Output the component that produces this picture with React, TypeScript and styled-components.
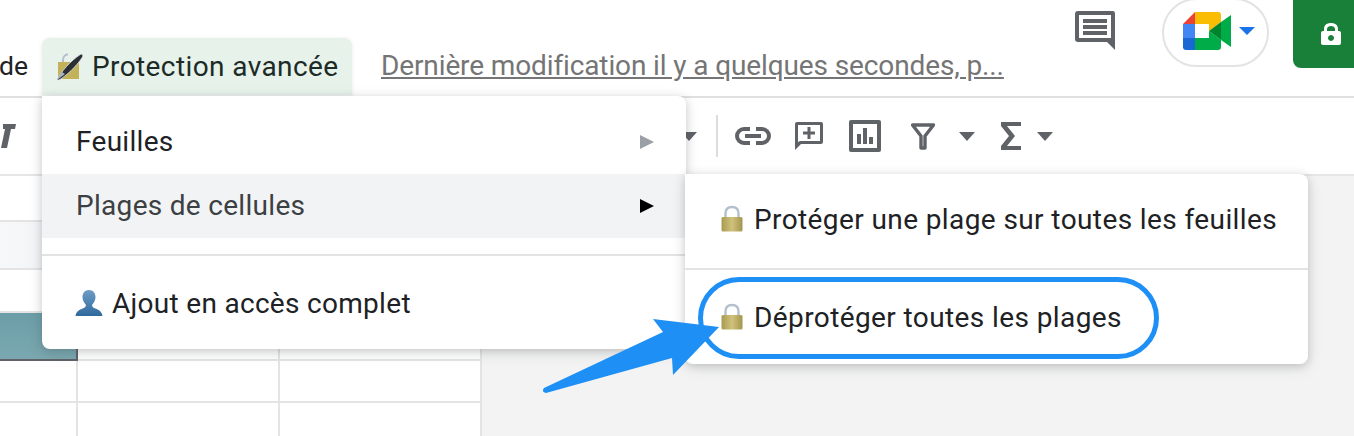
import * as React from 'react'
import styled, { createGlobalStyle } from 'styled-components'

const GlobalStyle = createGlobalStyle`
    html, body {
        margin: 0;
        padding: 0;
        background: #fff;
    }
`

const Page = styled.div`
    position: relative;
    width: 1354px;
    height: 436px;
    overflow: hidden;
    background: #f3f3f3;
    color: #202124;
    font-family: Roboto, "Liberation Sans", sans-serif;
    display: flex;
    flex-direction: column;
`

const TopBar = styled.header`
    height: 96px;
    flex: none;
    display: flex;
    align-items: flex-start;
    background: #fff;
    border-bottom: 2px solid #e0e0e0;
    box-sizing: content-box;
`

const MenuWord = styled.span`
    font-size: 26.5px;
    line-height: 32px;
    margin-top: 50px;
    margin-left: -1px;
    width: 43px;
    flex: none;
`

const ActiveTab = styled.div`
    width: 310px;
    height: 57px;
    margin-top: 38px;
    flex: none;
    box-sizing: border-box;
    padding: 0 0 0 14px;
    display: flex;
    align-items: center;
    gap: 8px;
    background: #e6f2ea;
    border-radius: 8px 8px 0 0;
    font-size: 28px;
    letter-spacing: 0.4px;
    color: #1c2b27;
    box-shadow: 0 1px 4px rgba(60, 64, 67, 0.12);
`

const LastEdit = styled.a`
    margin: 50px 0 0 29px;
    font-size: 28px;
    line-height: 32px;
    letter-spacing: -0.12px;
    color: #757575;
    text-decoration: underline;
    white-space: nowrap;
    flex: none;
`

const TopActions = styled.div`
    margin-left: auto;
    display: flex;
    align-items: flex-start;
`

const CommentButton = styled.div`
    margin-top: 11px;
    width: 41px;
    height: 40px;
`

const MeetPill = styled.div`
    margin: -2px 0 0 46px;
    width: 107px;
    height: 69px;
    box-sizing: border-box;
    border: 2px solid #e3e3e3;
    border-radius: 35px;
    display: flex;
    align-items: center;
    padding: 0 0 4px 19px;
    gap: 8px;
`

const ShareButton = styled.div`
    margin-left: 24px;
    width: 61px;
    height: 68px;
    background: #188038;
    border-radius: 0 0 0 8px;
    display: flex;
    align-items: center;
    padding: 0 0 0 28px;
    box-sizing: border-box;
`

const Toolbar = styled.div`
    height: 76px;
    flex: none;
    display: flex;
    align-items: center;
    background: #fff;
    border-bottom: 2px solid #e6e6e6;
`

const ToolIcon = styled.svg<{ $gap: number }>`
    flex: none;
    margin-left: ${(p) => p.$gap}px;
    display: block;
`

const ToolDivider = styled.div`
    flex: none;
    width: 2px;
    height: 42px;
    margin-left: 19px;
    background: #dadce0;
`

const SheetArea = styled.div`
    flex: 1;
    display: grid;
    grid-template-columns: 78px 202px 202px;
    grid-template-rows: 46px 48px 43px 48px 42px 42px;
    justify-content: start;
`

const Cell = styled.div<{ $selected?: boolean; $head?: boolean }>`
    background: ${(p) =>
        p.$selected
            ? 'linear-gradient(180deg, #6b9ea8, #7ba8b0)'
            : p.$head
                ? 'linear-gradient(90deg, #f7f8fa, #f0f1f3)'
                : '#fff'};
    border-bottom: 2px solid ${(p) => (p.$selected ? '#5f6368' : '#e4e4e4')};
    border-right: 2px solid ${(p) => (p.$selected ? '#5f6368' : '#e4e4e4')};
    box-sizing: border-box;
`

const Menu = styled.div`
    position: absolute;
    left: 42px;
    top: 96px;
    width: 644px;
    height: 253px;
    box-sizing: border-box;
    padding-top: 14px;
    background: #fff;
    border-radius: 0 8px 8px 8px;
    box-shadow: 0 2px 8px rgba(60, 64, 67, 0.22), 0 4px 16px rgba(60, 64, 67, 0.1);
`

const MenuRow = styled.div<{ $active?: boolean }>`
    height: 64px;
    display: flex;
    align-items: center;
    justify-content: space-between;
    padding: 0 32px 0 34px;
    font-size: 28px;
    letter-spacing: 0.3px;
    background: ${(p) => (p.$active ? '#f1f3f4' : 'transparent')};
    color: ${(p) => (p.$active ? '#3c4043' : '#202124')};

    > span:first-child {
        margin-top: -1px;
    }
`

const Arrowhead = styled.span<{ $active?: boolean }>`
    width: 0;
    height: 0;
    border-style: solid;
    border-width: 7px 0 7px 14px;
    border-color: transparent transparent transparent ${(p) => (p.$active ? '#000' : '#9aa0a6')};
`

const MenuDivider = styled.div`
    height: 2px;
    background: #e3e3e3;
    margin-top: 16px;
`

const IconLabel = styled.div`
    display: flex;
    align-items: center;
    gap: 9px;
`

const AccessRow = styled(MenuRow)`
    margin-top: 16px;
    padding-left: 33px;
    padding-bottom: 2px;
    box-sizing: border-box;
    height: 64px;
`

const SubMenu = styled.div`
    position: absolute;
    left: 685px;
    top: 174px;
    width: 623px;
    height: 190px;
    background: #fff;
    border-radius: 0 8px 8px 8px;
    box-shadow: 0 2px 8px rgba(60, 64, 67, 0.22), 0 4px 16px rgba(60, 64, 67, 0.1);
    font-size: 28px;
    letter-spacing: 0.4px;
`

const SubRow = styled.div<{ $height: number }>`
    height: ${(p) => p.$height}px;
    display: flex;
    align-items: center;
    padding-left: 35px;
    gap: 10px;
    white-space: nowrap;
    color: #202124;
`

const SubDivider = styled.div`
    height: 2px;
    margin-top: 4px;
    background: #e3e3e3;
`

const Ring = styled.div`
    position: absolute;
    left: 698px;
    top: 277px;
    width: 461px;
    height: 82px;
    box-sizing: border-box;
    border: 5px solid #1e90f5;
    border-radius: 41px;
`

const Pointer = styled.svg`
    position: absolute;
    left: 0;
    top: 0;
`

const Lock = () => (
    <svg width="24" height="28" viewBox="0 0 24 28">
        <defs>
            <linearGradient id="lockBody" x1="0" x2="1" y1="0" y2="0">
                <stop offset="0" stopColor="#a89a4e" />
                <stop offset="0.5" stopColor="#d0c27c" />
                <stop offset="1" stopColor="#a4964e" />
            </linearGradient>
        </defs>
        <path d="M5.500 14V8.500C5.500 4.500 8 2 12 2s6.500 2.500 6.500 6.500V14" fill="none" stroke="#b4c0ce" strokeWidth="2.400" />
        <rect x="1.500" y="12" width="21" height="14.500" rx="1.500" fill="url(#lockBody)" />
    </svg>
)

const PenLock = () => (
    <svg width="28" height="28" viewBox="0 0 28 28">
        <path d="M7 10 V7 C7 3 10 1.500 12 1.500" fill="none" stroke="#b4c0ce" strokeWidth="2" />
        <rect x="2" y="9" width="21" height="17" fill="#c4b25a" />
        <path d="M1 27 C5 19 14 8 25 1 C27 1 27 3 26.500 4 C20 14 10 23 3 27 Z" fill="#2b2f33" stroke="#dfe3e8" strokeWidth="0.800" />
        <path d="M1 27 L6 19 L9 21 Z" fill="#a8b4c4" />
    </svg>
)

const Person = () => (
    <svg width="28" height="28" viewBox="0 0 28 28">
        <defs>
            <linearGradient id="personFill" x1="0" x2="0" y1="0" y2="1">
                <stop offset="0" stopColor="#6d9cc6" />
                <stop offset="1" stopColor="#2f6a9c" />
            </linearGradient>
        </defs>
        <path d="M14 1c4.500 0 6.500 3.500 6.500 7 0 3-1.500 6-3.200 7.500-.6 1.500.3 3 3 4 3.500 1.200 6.500 3 7.200 7.500H.5c.7-4.500 3.700-6.300 7.200-7.500 2.700-1 3.600-2.500 3-4C9 14 7.500 11 7.500 8c0-3.500 2-7 6.500-7z" fill="url(#personFill)" />
    </svg>
)

const MeetLogo = () => (
    <svg width="48" height="38" viewBox="0 0 48 38">
        <path d="M0 12 L12 0 V12 Z" fill="#ea4335" />
        <path d="M12 0 H35 Q38 0 38 3 V10 L26 19 V12 H12 Z" fill="#fbbc04" />
        <rect x="0" y="12" width="12" height="14" fill="#4285f4" />
        <path d="M0 26 H12 V38 H3 Q0 38 0 35 Z" fill="#1967d2" />
        <path d="M12 26 H26 V19 L38 28 V35 Q38 38 35 38 H12 Z" fill="#00ac47" />
        <path d="M26 19 L38 10 V28 Z" fill="#00832d" />
        <path d="M38 10 L48 3 V35 L38 28 Z" fill="#00ac47" />
    </svg>
)

const Caret = ({ gap }: { gap: number }) => (
    <ToolIcon $gap={gap} width="16" height="9" viewBox="0 0 16 9">
        <path d="M0 0 H16 L8 9 Z" fill="#5f6368" />
    </ToolIcon>
)

const SELECTED_ROW = 3
const HEAD_ROW = 1
const rows = [0, 1, 2, 3, 4, 5]

export default function App() {
    return (
        <Page>
            <GlobalStyle />
            <TopBar>
                <MenuWord>de</MenuWord>
                <ActiveTab>
                    <PenLock />
                    <span>Protection avancée</span>
                </ActiveTab>
                <LastEdit>Dernière modification il y a quelques secondes, p...</LastEdit>
                <TopActions>
                    <CommentButton>
                        <svg width="41" height="40" viewBox="0 0 41 40">
                            <path d="M3 0 H38 Q40 0 40 3 V39 L32 31 H3 Q0 31 0 28 V3 Q0 0 3 0 Z M4 4 V27 H36 V4 Z" fill="#5f6368" fillRule="evenodd" />
                            <path d="M8 8 H32 V12 H8 Z M8 14 H32 V18 H8 Z M8 20 H32 V24 H8 Z" fill="#5f6368" />
                        </svg>
                    </CommentButton>
                    <MeetPill>
                        <MeetLogo />
                        <svg width="16" height="8" viewBox="0 0 16 8">
                            <path d="M0 0 H16 L8 8 Z" fill="#1a73e8" />
                        </svg>
                    </MeetPill>
                    <ShareButton>
                        <svg width="20" height="24" viewBox="0 0 20 24">
                            <path d="M3 9 V7 C3 3 6 1 10 1 s7 2 7 6 v2 h1 q2 0 2 2 v10 q0 2 -2 2 H2 q-2 0 -2 -2 V11 q0 -2 2 -2 Z M6 9 H14 V7 C14 5 12 4 10 4 S6 5 6 7 Z M10 13 a3 3 0 1 0 0.010 0 Z" fill="#fff" fillRule="evenodd" />
                        </svg>
                    </ShareButton>
                </TopActions>
            </TopBar>
            <Toolbar>
                <ToolIcon $gap={0} width="16" height="24" viewBox="0 0 16 24">
                    <path d="M3 0 H16 L15 5 H11 L7 24 H1 L5 5 H3 Z" fill="#5f6368" />
                </ToolIcon>
                <Caret gap={665} />
                <ToolDivider />
                <ToolIcon $gap={17} width="36" height="20" viewBox="0 0 36 20">
                    <path d="M15 3 H9 a7 7 0 0 0 0 14 H15 M21 3 H27 a7 7 0 0 1 0 14 H21 M10 10 H26" fill="none" stroke="#5f6368" strokeWidth="4" />
                </ToolIcon>
                <ToolIcon $gap={24} width="28" height="28" viewBox="0 0 28 28">
                    <path d="M2 0 H26 Q28 0 28 2 V20 Q28 22 26 22 H6 L0 28 V2 Q0 0 2 0 Z M3 3 V20 L5 19 H25 V3 Z" fill="#5f6368" fillRule="evenodd" />
                    <path d="M12.500 5 H15.500 V9.500 H20 V12.500 H15.500 V17 H12.500 V12.500 H8 V9.500 H12.500 Z" fill="#5f6368" />
                </ToolIcon>
                <ToolIcon $gap={26} width="32" height="32" viewBox="0 0 32 32">
                    <path d="M2 0 H30 Q32 0 32 2 V30 Q32 32 30 32 H2 Q0 32 0 30 V2 Q0 0 2 0 Z M4 4 V28 H28 V4 Z" fill="#5f6368" fillRule="evenodd" />
                    <path d="M8 14 H12 V24 H8 Z M14 8 H18 V24 H14 Z M20 17 H24 V24 H20 Z" fill="#5f6368" />
                </ToolIcon>
                <ToolIcon $gap={30} width="24" height="27" viewBox="0 0 24 27">
                    <path d="M1.500 2 H22.500 L14 13 V25 H10 V13 Z" fill="none" stroke="#5f6368" strokeWidth="3.400" strokeLinejoin="round" />
                </ToolIcon>
                <Caret gap={24} />
                <ToolIcon $gap={26} width="20" height="28" viewBox="0 0 20 28">
                    <path d="M20 0 V4 H6 L14 14 L6 24 H20 V28 H0 V24 L8 14 L0 4 V0 Z" fill="#5f6368" />
                </ToolIcon>
                <Caret gap={16} />
            </Toolbar>
            <SheetArea>
                {rows.flatMap((y) =>
                    [0, 1, 2].map((x) => (
                        <Cell
                            key={`${y}-${x}`}
                            $selected={y === SELECTED_ROW && x === 0}
                            $head={y === HEAD_ROW}
                        />
                    )),
                )}
            </SheetArea>

            <Menu>
                <MenuRow>
                    <span>Feuilles</span>
                    <Arrowhead />
                </MenuRow>
                <MenuRow $active>
                    <span>Plages de cellules</span>
                    <Arrowhead $active />
                </MenuRow>
                <MenuDivider />
                <AccessRow>
                    <IconLabel>
                        <Person />
                        <span>Ajout en accès complet</span>
                    </IconLabel>
                </AccessRow>
            </Menu>

            <SubMenu>
                <SubRow $height={90}>
                    <Lock />
                    <span>Protéger une plage sur toutes les feuilles</span>
                </SubRow>
                <SubDivider />
                <SubRow $height={94}>
                    <Lock />
                    <span>Déprotéger toutes les plages</span>
                </SubRow>
            </SubMenu>

            <Ring />
            <Pointer width="1354" height="436" viewBox="0 0 1354 436">
                <path d="M544 388 L663 332 L653 319 L719 327 L673 375 L672 358 L546 393 Q541 392 544 388 Z" fill="#1e90f5" />
            </Pointer>
        </Page>
    )
}
